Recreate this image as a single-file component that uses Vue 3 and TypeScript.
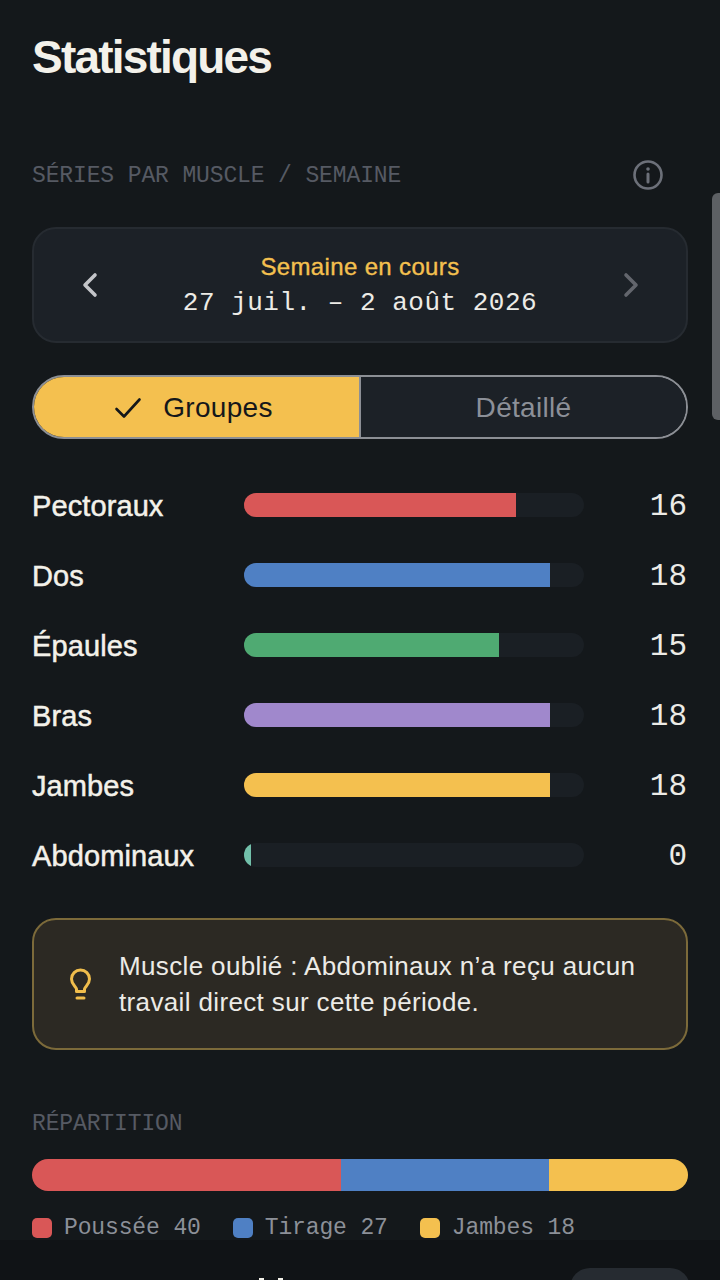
<script setup lang="ts">
interface Row { name: string; pct: number; color: string; value: number }
const rows: Row[] = [
  { name: 'Pectoraux', pct: 80, color: '#d95757', value: 16 },
  { name: 'Dos', pct: 90, color: '#4f80c4', value: 18 },
  { name: 'Épaules', pct: 75, color: '#4faa72', value: 15 },
  { name: 'Bras', pct: 90, color: '#a088cc', value: 18 },
  { name: 'Jambes', pct: 90, color: '#f4c04f', value: 18 },
  { name: 'Abdominaux', pct: 2, color: '#72c0aa', value: 0 },
]
const legend = [
  { label: 'Poussée 40', color: '#d95757' },
  { label: 'Tirage 27', color: '#4f80c4' },
  { label: 'Jambes 18', color: '#f4c04f' },
]
const split = [
  { grow: 40, color: '#d95757' },
  { grow: 27, color: '#4f80c4' },
  { grow: 18, color: '#f4c04f' },
]
</script>

<template>
  <div class="screen">
    <main class="content">
      <h1 class="title">Statistiques</h1>
      <div class="section-head">
        <span class="label head-label">SÉRIES PAR MUSCLE / SEMAINE</span>
        <svg class="info" viewBox="0 0 32 32" fill="none" stroke="#6c7079" stroke-width="2.6">
          <circle cx="16" cy="16" r="13.5" />
          <path d="M16 15v8" stroke-linecap="round" stroke-width="3" />
          <circle cx="16" cy="10" r="1.8" fill="#6c7079" stroke="none" />
        </svg>
      </div>
      <section class="week">
        <svg class="chev" viewBox="0 0 20 28" fill="none" stroke="#c3c5c9" stroke-width="3.6" stroke-linecap="round" stroke-linejoin="round">
          <path d="M15 4 5 14l10 10" />
        </svg>
        <div class="week-text">
          <div class="week-title">Semaine en cours</div>
          <div class="week-date">27 juil. – 2 août 2026</div>
        </div>
        <svg class="chev" viewBox="0 0 20 28" fill="none" stroke="#63666d" stroke-width="3.6" stroke-linecap="round" stroke-linejoin="round">
          <path d="m6 4 10 10-10 10" />
        </svg>
      </section>
      <div class="toggle">
        <div class="seg seg-on">
          <svg class="check" viewBox="0 0 28 22" fill="none" stroke="#14171a" stroke-width="2.6" stroke-linecap="round" stroke-linejoin="round">
            <path d="M2.500 12 10 19.500 25.500 2.500" />
          </svg>
          <span>Groupes</span>
        </div>
        <div class="seg seg-off">Détaillé</div>
      </div>
      <div class="rows">
        <div v-for="r in rows" :key="r.name" class="row">
          <span class="row-name">{{ r.name }}</span>
          <div class="track">
            <div class="fill" :style="{ width: r.pct + '%', background: r.color }"></div>
          </div>
          <span class="row-value">{{ r.value }}</span>
        </div>
      </div>
      <div class="tip">
        <svg class="bulb" viewBox="0 0 22 32" fill="none" stroke="#f0bd4c" stroke-width="3" stroke-linecap="round" stroke-linejoin="round">
          <path d="M6.500 23.500V21C6 18.500 1.500 16.500 1.500 11a9 9 0 0 1 18 0c0 5.500-4.500 7.500-5 10v2.500Z" />
          <path d="M7 30h7" />
        </svg>
        <p class="tip-text">Muscle oublié : Abdominaux n’a reçu aucun travail direct sur cette période.</p>
      </div>
      <div class="label rep-label">RÉPARTITION</div>
      <div class="split">
        <div v-for="s in split" :key="s.color" :style="{ flexGrow: s.grow, background: s.color }" class="split-part"></div>
      </div>
      <div class="legend">
        <div v-for="l in legend" :key="l.label" class="legend-item">
          <span class="swatch" :style="{ background: l.color }"></span>
          <span>{{ l.label }}</span>
        </div>
      </div>
    </main>
    <div class="scrollbar"></div>
    <nav class="nav">
      <div class="nav-glyph"><i></i><i></i></div>
      <div class="nav-pill"></div>
    </nav>
  </div>
</template>

<style>
html, body { margin: 0; background: #14181b; }
</style>

<style scoped>
.screen {
  position: relative;
  width: 720px;
  height: 1280px;
  overflow: hidden;
  background: #14181b;
  font-family: "Liberation Sans", Arial, sans-serif;
  color: #f2f0ea;
}
.content { padding: 30px 32px 0; }
.title {
  margin: 0;
  font-size: 46px;
  line-height: 54px;
  font-weight: 700;
  letter-spacing: -1.8px;
  color: #f3f1ea;
}
.section-head {
  margin-top: 76px;
  height: 30px;
  display: flex;
  align-items: center;
  justify-content: space-between;
  padding-right: 24px;
}
.label {
  font-family: "Liberation Mono", monospace;
  font-size: 23px;
  line-height: 30px;
  letter-spacing: -0.13px;
  color: #565a63;
}
.head-label { padding-top: 2px; }
.info { width: 32px; height: 32px; }
.week {
  margin-top: 37px;
  height: 116px;
  box-sizing: border-box;
  border: 2px solid #262b31;
  border-radius: 24px;
  background: #1c2127;
  display: flex;
  align-items: center;
  justify-content: space-between;
  padding: 0 46px;
}
.chev { width: 20px; height: 28px; }
.week-text { text-align: center; padding-top: 2px; }
.week-title {
  font-size: 24px;
  line-height: 32px;
  letter-spacing: 0.35px;
  margin-bottom: 2px;
  -webkit-text-stroke: 0.35px #f4c04f;
  color: #f4c04f;
}
.week-date {
  font-family: "Liberation Mono", monospace;
  font-size: 26px;
  line-height: 36px;
  letter-spacing: 0.5px;
  color: #ecebe6;
}
.toggle {
  margin-top: 32px;
  height: 64px;
  box-sizing: border-box;
  border: 2px solid #8c8f95;
  border-radius: 32px;
  overflow: hidden;
  display: flex;
  font-size: 28px;
  letter-spacing: 0.3px;
}
.seg {
  box-sizing: border-box;
  display: flex;
  align-items: center;
  justify-content: center;
  padding-top: 2px;
}
.seg-on {
  flex: 0 0 327px;
  background: #f4c04f;
  color: #14171a;
  gap: 21px;
  border-right: 2px solid #8c8f95;
  padding-right: 6px;
}
.seg-off { flex: 1 1 0; background: #1c2127; color: #8c9098; }
.check { width: 28px; height: 22px; }
.rows { margin-top: 31px; display: flex; flex-direction: column; }
.row {
  height: 70px;
  display: grid;
  grid-template-columns: 212px 340px 1fr;
  align-items: center;
}
.row-name {
  font-size: 29px;
  letter-spacing: 0.1px;
  padding-top: 2px;
  -webkit-text-stroke: 0.5px #f3f1ea;
  color: #f3f1ea;
}
.track { height: 24px; border-radius: 12px; background: #1a1f24; overflow: hidden; }
.fill { height: 100%; }
.row-value {
  font-family: "Liberation Mono", monospace;
  font-size: 31px;
  padding-top: 2px;
  padding-right: 1px;
  text-align: right;
  color: #ecebe6;
}
.tip {
  margin-top: 28px;
  height: 132px;
  box-sizing: border-box;
  border: 2px solid #7c6a3a;
  border-radius: 24px;
  background: #2c2923;
  display: flex;
  align-items: center;
  gap: 27px;
  padding: 0 36px;
}
.bulb { width: 22px; height: 32px; flex: none; }
.tip-text {
  margin: 0;
  font-size: 26px;
  line-height: 36px;
  letter-spacing: 0.36px;
  color: #ecebe6;
}
.rep-label { margin-top: 59px; }
.split { margin-top: 20px; height: 32px; display: flex; border-radius: 16px; overflow: hidden; }
.split-part { flex-basis: 0; }
.legend { margin-top: 22px; display: flex; gap: 32px; }
.legend-item {
  display: flex;
  align-items: center;
  gap: 12px;
  font-family: "Liberation Mono", monospace;
  font-size: 23px;
  line-height: 30px;
  letter-spacing: -0.13px;
  color: #8c9098;
}
.swatch { width: 20px; height: 20px; border-radius: 5px; }
.scrollbar {
  position: absolute;
  right: 0;
  top: 193px;
  width: 8px;
  height: 227px;
  border-radius: 6px 0 0 6px;
  background: #5d6064;
}
.nav {
  position: absolute;
  left: 0;
  right: 0;
  bottom: 0;
  height: 40px;
  background: #101316;
}
.nav-glyph { position: absolute; left: 259px; top: 38px; display: flex; gap: 14px; }
.nav-glyph i { width: 5px; height: 6px; background: #f3f1ea; }
.nav-pill {
  position: absolute;
  left: 570px;
  top: 28px;
  width: 120px;
  height: 40px;
  border-radius: 20px;
  background: #262b31;
}
</style>
